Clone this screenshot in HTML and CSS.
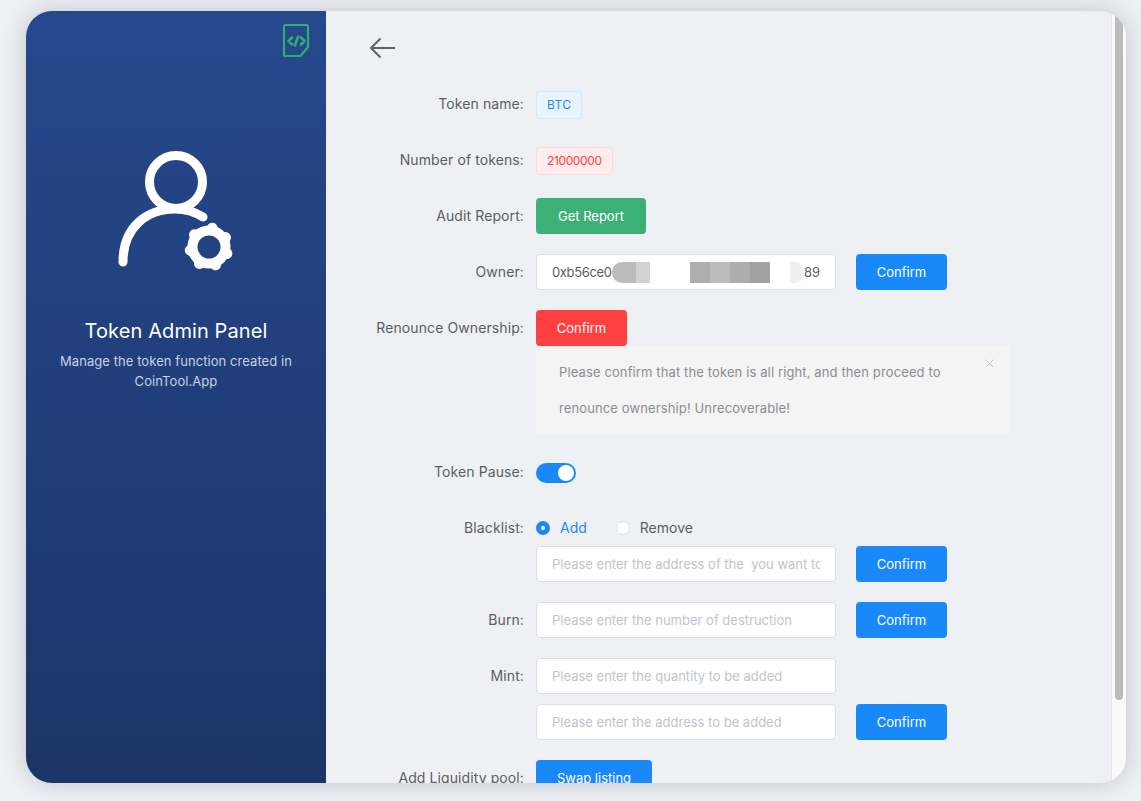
FILE: index.html
```html
<!DOCTYPE html>
<html lang="en">
<head>
    <meta charset="UTF-8">
    <meta name="viewport" content="width=device-width, initial-scale=1.0">
    <title>Token Admin Panel</title>
    <link rel="stylesheet" href="styles.css">
</head>
<body>
    <div class="card">
        <aside class="sidebar">
            <div class="doc-row">
                <svg class="doc-icon" width="28" height="35" viewBox="0 0 28 35" fill="none" stroke="#2fae74" stroke-width="2.2" stroke-linejoin="round" stroke-linecap="round">
                    <path d="M3.500 2h21a1.500 1.500 0 0 1 1.500 1.500v20.500l-7.500 9h-15a1.500 1.500 0 0 1-1.500-1.500v-28a1.500 1.500 0 0 1 1.500-1.500z"/>
                    <path d="M10 14.500l-3.500 3.500 3.500 3.500M19 14.500l3.500 3.500-3.500 3.500M16.200 13.500l-3.400 9" stroke-width="2.600"/>
                </svg>
            </div>
            <svg class="user-icon" width="120" height="130" viewBox="0 0 120 130" fill="none" stroke="#fff" stroke-linecap="round">
                <circle cx="58" cy="37" r="26.500" stroke-width="9"/>
                <path d="M5 117c0-35 24-53 52-53 12 0 20 3 28 8" stroke-width="9"/>
                <circle cx="91" cy="102" r="16.500" stroke-width="10"/>
                <g stroke-width="11">
                    <path d="M91 83v0" transform="rotate(10 91 102)"/>
                    <path d="M91 83v0" transform="rotate(60 91 102)"/>
                    <path d="M91 83v0" transform="rotate(110 91 102)"/>
                    <path d="M91 83v0" transform="rotate(160 91 102)"/>
                    <path d="M91 83v0" transform="rotate(210 91 102)"/>
                    <path d="M91 83v0" transform="rotate(260 91 102)"/>
                    <path d="M91 83v0" transform="rotate(310 91 102)"/>
                </g>
            </svg>
            <h1>Token Admin Panel</h1>
            <p>Manage the token function created in CoinTool.App</p>
        </aside>

        <main class="content">
            <svg class="back" width="26" height="22" viewBox="0 0 26 22" fill="none" stroke="#606266" stroke-width="2">
                <path d="M11.500 1.500L2 11l9.500 9.500M2 11h24"/>
            </svg>

            <div class="row">
                <label>Token name:</label>
                <span class="tag tag-blue">BTC</span>
            </div>
            <div class="row">
                <label>Number of tokens:</label>
                <span class="tag tag-red">21000000</span>
            </div>
            <div class="row">
                <label>Audit Report:</label>
                <button class="btn btn-green">Get Report</button>
            </div>
            <div class="row">
                <label>Owner:</label>
                <div class="input owner">
                    <span class="owner-start">0xb56ce0</span>
                    <span class="smudge">
                        <i class="s1"></i><i class="s2"></i><i class="s3"></i><i class="s4"></i><i class="s5"></i><i class="s6"></i><i class="s7"></i><i class="s8"></i><i class="s9"></i>
                    </span>
                    <span>89</span>
                </div>
                <button class="btn btn-blue">Confirm</button>
            </div>
            <div class="row row-tight">
                <label>Renounce Ownership:</label>
                <button class="btn btn-red">Confirm</button>
            </div>
            <div class="alert">
                <p>Please confirm that the token is all right, and then proceed to renounce ownership! Unrecoverable!</p>
                <svg class="alert-close" width="9" height="9" viewBox="0 0 9 9" stroke="#c0c4cc" stroke-width="1">
                    <path d="M.5.500l8 8M8.500.500l-8 8"/>
                </svg>
            </div>
            <div class="row">
                <label>Token Pause:</label>
                <span class="switch"><span class="knob"></span></span>
            </div>
            <div class="row row-tight">
                <label>Blacklist:</label>
                <span class="radio radio-on"><span class="dot"></span>Add</span>
                <span class="radio"><span class="dot"></span>Remove</span>
            </div>
            <div class="row">
                <label></label>
                <input class="input" placeholder="Please enter the address of the  you want to add">
                <button class="btn btn-blue">Confirm</button>
            </div>
            <div class="row">
                <label>Burn:</label>
                <input class="input" placeholder="Please enter the number of destruction">
                <button class="btn btn-blue">Confirm</button>
            </div>
            <div class="row row-mint">
                <label>Mint:</label>
                <input class="input" placeholder="Please enter the quantity to be added">
            </div>
            <div class="row">
                <label></label>
                <input class="input" placeholder="Please enter the address to be added">
                <button class="btn btn-blue">Confirm</button>
            </div>
            <div class="row">
                <label>Add Liquidity pool:</label>
                <button class="btn btn-blue btn-wide">Swap listing</button>
            </div>
        </main>

        <div class="scrollbar"><div class="thumb"></div></div>
    </div>
</body>
</html>
```

FILE: styles.css
```css
* {
    padding: 0;
    margin: 0;
    box-sizing: border-box;
}
html, body {
    height: 100%;
    overflow: hidden;
}
body {
    background-color: #f0f1f5;
    font-family: Inter, "Liberation Sans", sans-serif;
    font-size: 14px;
    color: #5c5e62;
    padding: 11px 15px 18px 26px;
}
.card {
    display: flex;
    height: 772px;
    border-radius: 26px;
    overflow: hidden;
    background-color: #eef0f4;
    box-shadow: 0 0 24px rgba(60, 65, 85, 0.27);
}

/* left panel */
.sidebar {
    flex: 0 0 300px;
    display: flex;
    flex-direction: column;
    align-items: center;
    background: linear-gradient(180deg, #26488d 0%, #1b3567 100%);
    color: #fff;
    text-align: center;
}
.doc-row {
    align-self: flex-end;
    padding: 12px 16px 0 0;
    height: 134px;
}
.doc-icon {
    display: block;
}
.user-icon {
    display: block;
    margin-left: 4px;
    height: 130px;
}
.sidebar h1 {
    font-size: 20px;
    font-weight: 400;
    line-height: 28px;
    margin-top: 42px;
    letter-spacing: 0.1px;
}
.sidebar p {
    width: 250px;
    font-size: 13px;
    line-height: 20px;
    margin-top: 6px;
    color: #c8d1e4;
    letter-spacing: 0.07px;
}

/* right panel */
.content {
    flex: 1;
    min-width: 0;
    overflow: hidden;
    padding: 26px 0 0 0;
}
.back {
    display: block;
    margin: 0 0 27px 43px;
}
.row {
    display: flex;
    align-items: center;
    height: 36px;
    margin-bottom: 20px;
}
.row-tight {
    margin-bottom: 0;
}
.row-mint {
    margin-bottom: 10px;
}
.row label {
    flex: 0 0 198px;
    text-align: right;
    margin: 0 12px 2px 0;
    white-space: nowrap;
    letter-spacing: 0.1px;
}
.tag {
    display: inline-block;
    height: 28px;
    line-height: 26px;
    padding: 0 10px;
    margin-top: 2px;
    font-size: 12px;
    border-radius: 4px;
    border: 1px solid;
}
.tag-blue {
    color: #1989fa;
    background-color: #e8f4ff;
    border-color: #d1e9ff;
    letter-spacing: 0.3px;
}
.tag-red {
    color: #ff4040;
    background-color: #ffecec;
    border-color: #ffd9d9;
    letter-spacing: -0.38px;
}
.btn {
    height: 36px;
    width: 91px;
    border: none;
    border-radius: 4px;
    color: #fff;
    font-family: inherit;
    font-size: 13px;
    cursor: pointer;
}
.btn-wide {
    width: 116px;
}
.btn-green {
    width: 110px;
    background-color: #3cb077;
}
.btn-blue {
    background-color: #1989fa;
}
.btn-red {
    background-color: #ff4040;
}
.input {
    width: 300px;
    height: 36px;
    padding: 0 15px;
    margin-right: 20px;
    background-color: #fff;
    border: 1px solid #dcdfe6;
    border-radius: 4px;
    font-family: inherit;
    font-size: 13px;
    color: #5c5e62;
    outline: none;
}
.input::placeholder {
    color: #c0c4cc;
    opacity: 1;
}
.owner {
    display: flex;
    align-items: center;
}
.owner-start {
    letter-spacing: -0.35px;
}
.smudge {
    display: flex;
    height: 21px;
    flex: 1;
    margin: 0 1px 0 0;
}
.smudge i {
    display: block;
    width: 20px;
}
.smudge .s1 { width: 24px; background-color: #bcbcbc; border-radius: 10px 0 0 10px; }
.smudge .s2 { width: 14px; background-color: #d2d2d2; }
.smudge .s3 { width: 40px; background-color: #fff; }
.smudge .s4 { background-color: #aeaeae; }
.smudge .s5 { background-color: #bcbcbc; }
.smudge .s6 { background-color: #adadad; }
.smudge .s7 { background-color: #a2a2a2; }
.smudge .s8 { background-color: #fff; }
.smudge .s9 { width: 13px; background-color: #efefef; border-radius: 0 8px 8px 0; }
.alert {
    display: flex;
    justify-content: space-between;
    width: 474px;
    height: 88px;
    margin: 0 0 20px 210px;
    padding: 8px 16px 8px 23px;
    background-color: #f4f4f5;
    border-radius: 4px;
    color: #8b8d92;
    font-size: 13px;
    line-height: 36px;
    letter-spacing: 0.12px;
}
.alert p {
    width: 410px;
}
.alert-close {
    margin-top: 5px;
}
.switch {
    display: block;
    width: 40px;
    height: 20px;
    margin-top: 2px;
    padding: 2px 2px 2px 22px;
    border-radius: 10px;
    background-color: #1989fa;
}
.knob {
    display: block;
    width: 16px;
    height: 16px;
    border-radius: 50%;
    background-color: #fff;
}
.radio {
    display: flex;
    align-items: center;
    margin-right: 29px;
    line-height: 16px;
}
.dot {
    display: block;
    width: 14px;
    height: 14px;
    margin-right: 10px;
    border-radius: 50%;
    background-color: #fff;
    border: 1px solid #dcdfe6;
}
.radio-on {
    color: #1989fa;
}
.radio-on .dot {
    border: 5px solid #1989fa;
}

/* fake scrollbar */
.scrollbar {
    flex: 0 0 15px;
    background-color: #fafafa;
    border-left: 1px solid #e6e6e6;
    padding: 0 3px 0 3px;
}
.thumb {
    height: 689px;
    background-color: #bcbcbc;
    border-radius: 0 0 4px 4px;
}
```
